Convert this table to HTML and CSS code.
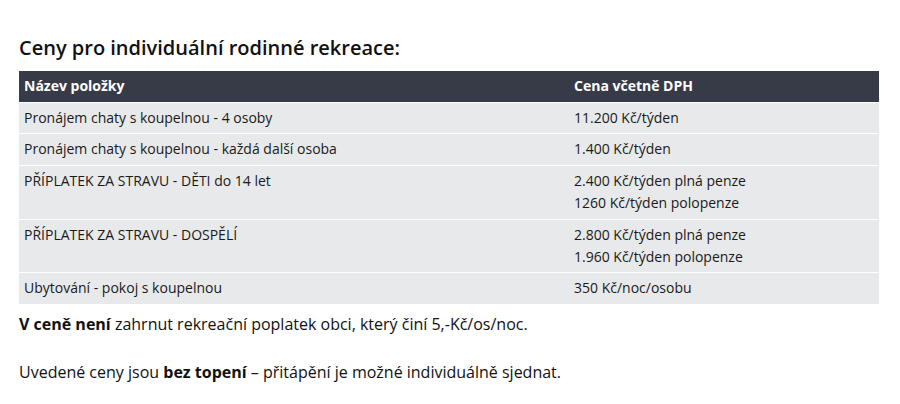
FILE: index.html
```html
<!DOCTYPE html>
<html lang="cs">
<head>
<meta charset="utf-8">
<link rel="stylesheet" href="styles.css">
</head>
<body>
<div class="content">
  <h2 class="title">Ceny pro individuální rodinné rekreace:</h2>
  <table class="prices">
    <thead>
      <tr><th class="col-name">Název položky</th><th>Cena včetně DPH</th></tr>
    </thead>
    <tbody>
      <tr><td>Pronájem chaty s koupelnou - 4 osoby</td><td>11.200 Kč/týden</td></tr>
      <tr><td>Pronájem chaty s koupelnou - každá další osoba</td><td>1.400 Kč/týden</td></tr>
      <tr><td>PŘÍPLATEK ZA STRAVU - DĚTI do 14 let</td><td>2.400 Kč/týden plná penze<br>1260 Kč/týden polopenze</td></tr>
      <tr><td>PŘÍPLATEK ZA STRAVU - DOSPĚLÍ</td><td>2.800 Kč/týden plná penze<br>1.960 Kč/týden polopenze</td></tr>
      <tr><td>Ubytování - pokoj s koupelnou</td><td>350 Kč/noc/osobu</td></tr>
    </tbody>
  </table>
  <p class="note"><strong>V ceně není</strong> zahrnut rekreační poplatek obci, který činí 5,-Kč/os/noc.</p>
  <p class="note"><span>Uvedené ceny jsou </span><strong>bez topení</strong> – přitápění je možné individuálně sjednat.</p>
</div>
</body>
</html>
```
FILE: styles.css
```css
html, body {
  margin: 0;
  padding: 0;
  background: #ffffff;
}
body {
  font-family: "Open Sans", "DejaVu Sans", sans-serif;
  color: #111111;
}
.content {
  padding: 34px 21px 0 19px;
}
.title {
  margin: 0 0 10px 0;
  font-size: 20px;
  font-weight: 600;
  line-height: 27px;
  color: #111;
}
.prices {
  width: 860px;
  border-collapse: collapse;
  font-size: 14px;
  line-height: 1.6;
}
.prices th {
  background: #363b47;
  color: #ffffff;
  font-weight: 700;
  text-align: left;
  line-height: 22px;
  padding: 4px 5px 5px;
  border-bottom: 1px solid #ffffff;
}
.prices .col-name {
  width: 540px;
}
.prices td {
  background: #e8e9ea;
  padding: 4px 5px 4px;
  vertical-align: top;
  border-bottom: 1px solid #ffffff;
  color: #1a1a1a;
}
.prices tbody tr:last-child td {
  border-bottom: 0;
}
.note {
  margin: 7px 0 22px;
  font-size: 16px;
  line-height: 26px;
}
.note strong {
  font-weight: 700;
}
```
